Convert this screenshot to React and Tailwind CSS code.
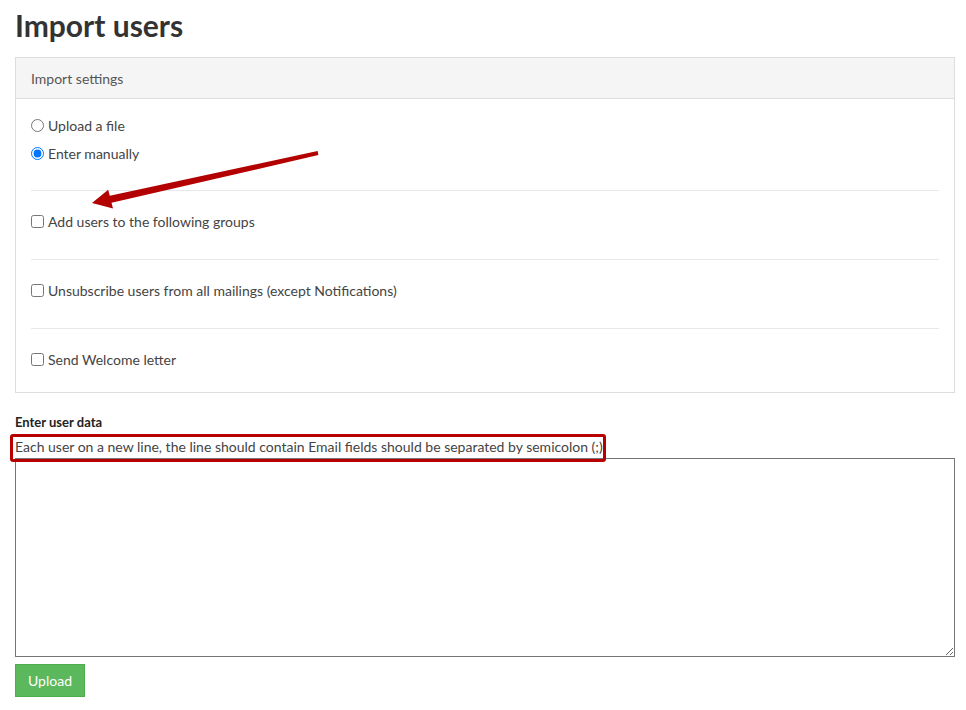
import React from "react";

const Radio = ({ checked, label }) => (
  <label className="flex items-center h-[28px] text-[14px] text-[#444]">
    <input type="radio" name="mode" defaultChecked={checked} className="m-0 mr-[4px] w-[13px] h-[13px] accent-[#0075ff]" />
    <span>{label}</span>
  </label>
);

const CheckRow = ({ label, last }) => (
  <div className={"border-t border-[#e8e8e8] pt-[20px] " + (last ? "pb-[23px]" : "pb-[28px]")}>
    <label className="flex items-center h-[20px] text-[14px] text-[#444]">
      <input type="checkbox" className="m-0 mr-[4px] w-[13px] h-[13px]" />
      <span>{label}</span>
    </label>
  </div>
);

const App = () => {
  return (
    <div className="relative w-[966px] min-h-[710px] bg-white pl-[15px] pr-[11px] font-['Lato','Liberation_Sans',sans-serif] text-[#333]">
      <h1 className="pt-[5px] h-[57px] text-[30px] font-bold leading-[40px] text-[#333]">Import users</h1>

      <div className="border border-[#dddddd]">
        <div className="h-[41px] bg-[#f5f5f5] border-b border-[#dddddd] px-[15px] flex items-center text-[14px] text-[#555]">
          Import settings
        </div>
        <div className="px-[15px]">
          <div className="pt-[12px] pb-[23px]">
            <Radio label="Upload a file" />
            <Radio label="Enter manually" checked />
          </div>
          <CheckRow label="Add users to the following groups" />
          <CheckRow label="Unsubscribe users from all mailings (except Notifications)" />
          <CheckRow label="Send Welcome letter" last />
        </div>
      </div>

      <div className="pt-[19px] mb-[5px] text-[13px] font-bold text-[#222] leading-[20px]">Enter user data</div>
      <div className="text-[14px] text-[#444] leading-[20px] h-[21px]">
        Each user on a new line, the line should contain Email fields should be separated by semicolon (;)
      </div>
      <textarea className="block w-[940px] h-[199px] border border-[#767676] outline-none" />
      <button className="mt-[7px] w-[70px] h-[33px] bg-[#5cb85c] border border-[#4cae4c] text-white text-[14px]">
        Upload
      </button>

      <div className="absolute left-[10px] top-[434px] w-[596px] h-[28px] border-[3px] border-[#b80000] rounded-[3px] pointer-events-none" />

      <svg className="absolute left-0 top-0 pointer-events-none" width="966" height="710">
        <polygon
          fill="#b30000"
          points="318.4,155 111.5,202.8 113,208.5 92,203 108.2,189.8 109.8,195.8 317.6,151"
        />
      </svg>
    </div>
  );
};

export default App;
